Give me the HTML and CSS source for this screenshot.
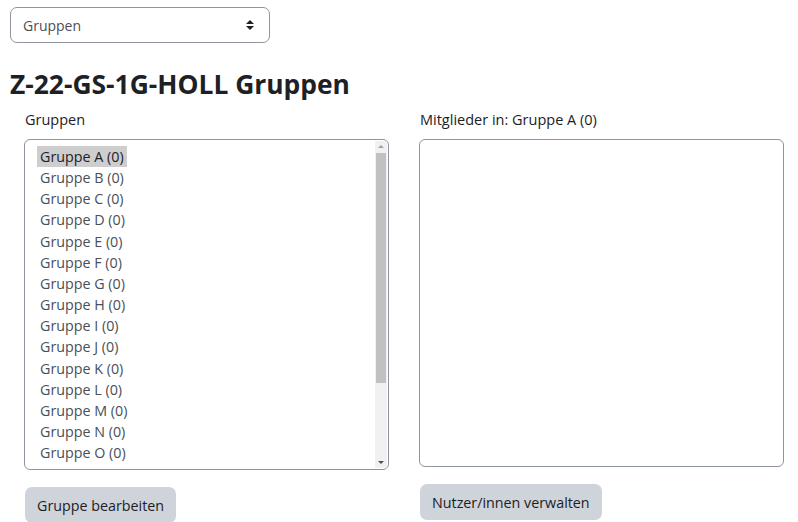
FILE: index.html
```html
<!DOCTYPE html>
<html lang="de">
<head>
<meta charset="utf-8">
<link rel="stylesheet" href="styles.css">
</head>
<body>
<div class="page">
  <div class="select">
    <span>Gruppen</span>
    <svg class="arrows" width="10" height="12" viewBox="0 0 10 12"><path d="M5 1 L9 5 H1 Z M5 11 L9 7 H1 Z" fill="#1d2125"/></svg>
  </div>
  <h2 class="title">Z-22-GS-1G-HOLL Gruppen</h2>
  <div class="columns">
    <div class="col">
      <div class="label">Gruppen</div>
      <div class="listbox">
        <ul class="options">
          <li class="selected">Gruppe A (0)</li>
          <li>Gruppe B (0)</li>
          <li>Gruppe C (0)</li>
          <li>Gruppe D (0)</li>
          <li>Gruppe E (0)</li>
          <li>Gruppe F (0)</li>
          <li>Gruppe G (0)</li>
          <li>Gruppe H (0)</li>
          <li>Gruppe I (0)</li>
          <li>Gruppe J (0)</li>
          <li>Gruppe K (0)</li>
          <li>Gruppe L (0)</li>
          <li>Gruppe M (0)</li>
          <li>Gruppe N (0)</li>
          <li>Gruppe O (0)</li>
          <li>Gruppe P (0)</li>
        </ul>
        <div class="scrollbar">
          <div class="sb-arrow up"></div>
          <div class="sb-track"><div class="sb-thumb"></div></div>
          <div class="sb-arrow down"></div>
        </div>
      </div>
      <button class="btn">Gruppe bearbeiten</button>
    </div>
    <div class="col">
      <div class="label">Mitglieder in: Gruppe A (0)</div>
      <div class="listbox members"></div>
      <button class="btn">Nutzer/innen verwalten</button>
    </div>
  </div>
</div>
</body>
</html>
```
FILE: styles.css
```css
* { box-sizing: border-box; }
html, body { margin: 0; padding: 0; background: #fff; }
body {
  font-family: "Open Sans", "Noto Sans", sans-serif;
  color: #1d2125;
  font-size: 14px;
  overflow: hidden;
}
.page { padding: 7px 0 0 10px; }
.select {
  width: 260px;
  height: 36px;
  border: 1px solid #8f959e;
  border-radius: 7px;
  display: flex;
  align-items: center;
  justify-content: space-between;
  padding: 0 14px 0 12px;
  color: #495057;
  font-size: 14px;
}
.arrows { display: block; }
.title {
  margin: 24px 0 0 0;
  font-size: 26.4px;
  font-weight: 700;
  line-height: 34px;
  color: #1d2125;
}
.columns {
  display: flex;
  gap: 30px;
  padding-left: 14px;
  margin-top: 9px;
}
.col { width: 365px; display: flex; flex-direction: column; align-items: flex-start; }
.label { font-size: 14.5px; line-height: 20px; padding-left: 1px; margin-bottom: 9px; }
.listbox {
  width: 365px;
  height: 331px;
  border: 1px solid #8f959e;
  border-radius: 6px;
  display: flex;
  overflow: hidden;
}
.members { height: 328px; }
.options {
  list-style: none;
  margin: 0;
  padding: 6px 0 0 12px;
  flex: 1;
  overflow: hidden;
}
.options li {
  font-size: 14.3px;
  line-height: 21.15px;
  padding: 0 3px;
  color: #495057;
  width: max-content;
}
.options li.selected { background: #cecece; color: #1d2125; }
.scrollbar {
  width: 12px;
  margin: 1px 1px 1px 0;
  background: #f1f1f1;
  display: flex;
  flex-direction: column;
}
.sb-arrow { height: 12px; position: relative; }
.sb-arrow.up::after, .sb-arrow.down::after {
  content: "";
  position: absolute;
  left: 3px;
  border-left: 3px solid transparent;
  border-right: 3px solid transparent;
}
.sb-arrow.up::after { top: 4px; border-bottom: 3px solid #a3a3a3; }
.sb-arrow.down::after { top: 5px; border-top: 3px solid #505050; }
.sb-track { flex: 1; padding: 0 1px; }
.sb-thumb { height: 230px; background: #c1c1c1; }
.btn {
  font-family: inherit;
  font-size: 14.3px;
  color: #1d2125;
  background: #ced4da;
  border: none;
  border-radius: 7px;
  height: 36px;
  padding: 0 12px;
  margin-top: 17px;
  margin-left: 1px;
  cursor: pointer;
}
```
